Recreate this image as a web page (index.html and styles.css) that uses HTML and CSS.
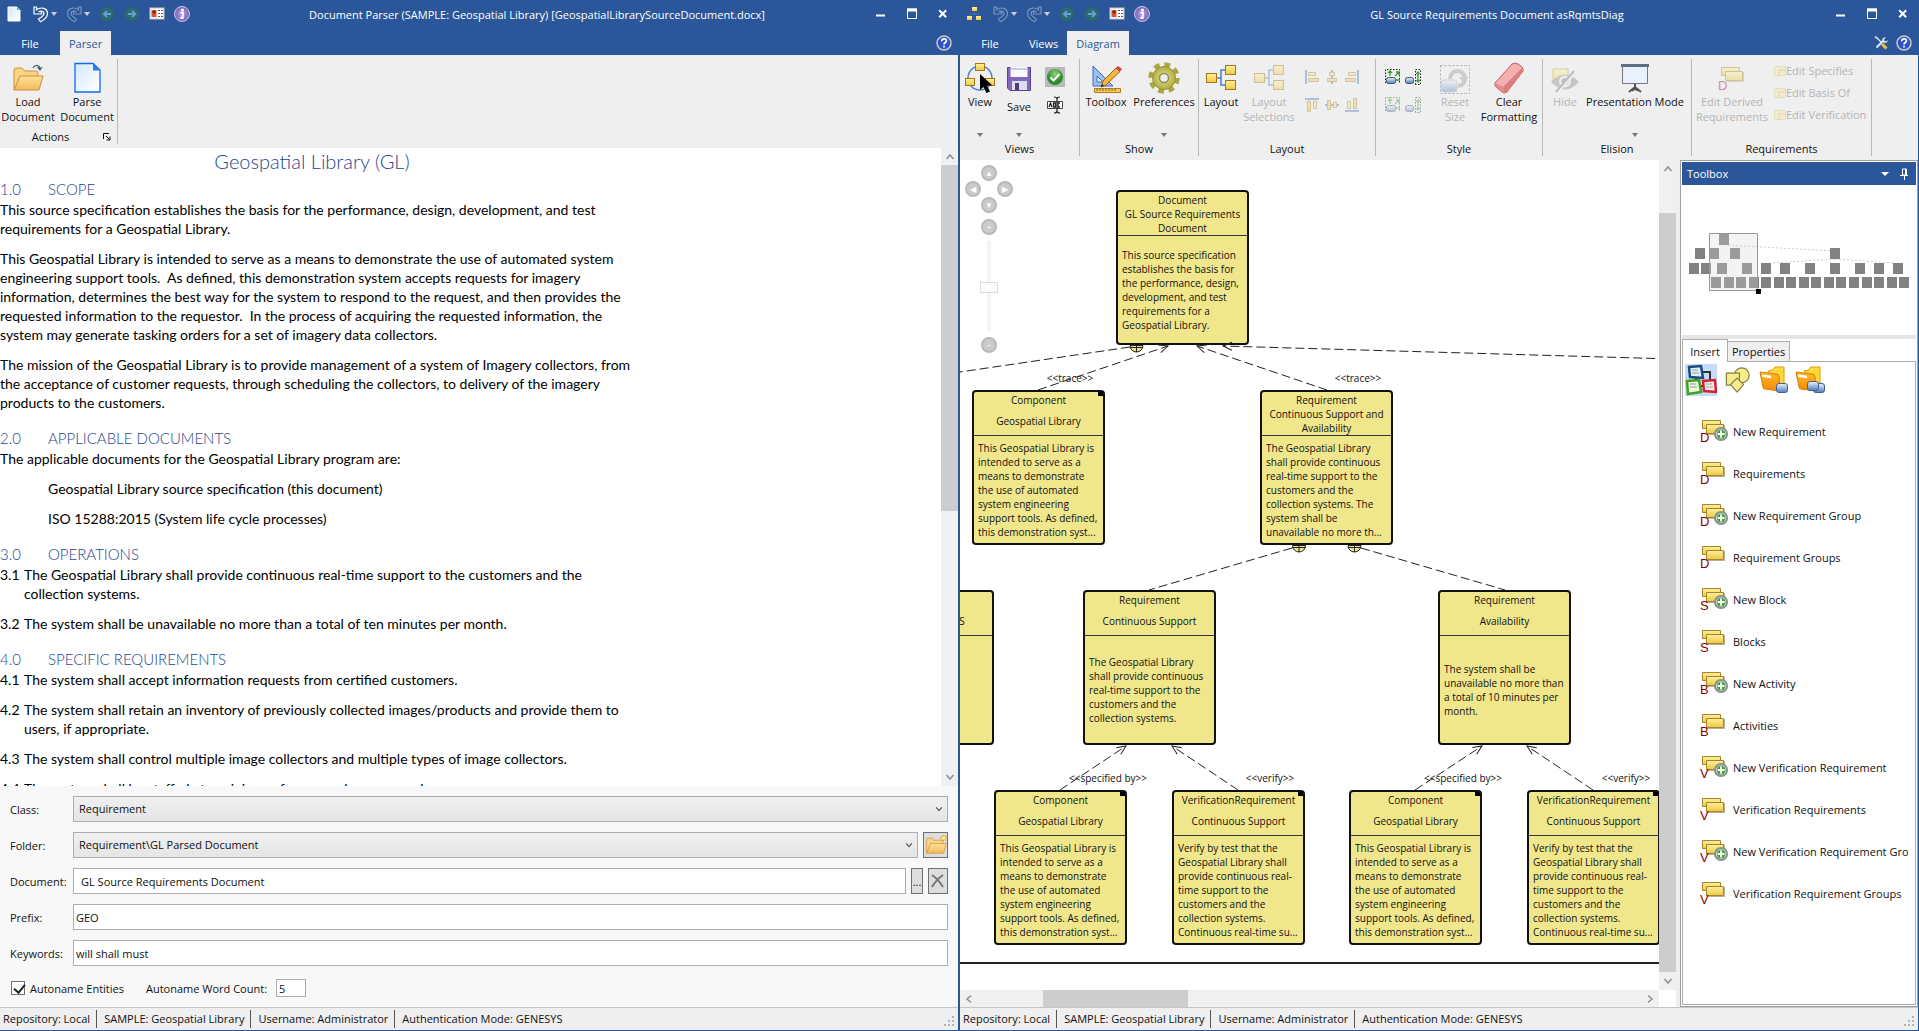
FILE: index.html
```
<!DOCTYPE html>
<html lang="en">
<head>
    <meta charset="UTF-8">
    <meta name="viewport" content="width=device-width, initial-scale=1.0">
    <title>Document Parser</title>
    <link rel="stylesheet" href="styles.css">
</head>
<body>
    <!-- shared icons -->
    <svg class="sprite" aria-hidden="true">
        <defs>
            <linearGradient id="gYellow" x1="0" y1="0" x2="0" y2="1"><stop offset="0" stop-color="#fff0a0"/><stop offset="1" stop-color="#eec93f"/></linearGradient>
            <linearGradient id="gFolder" x1="0" y1="0" x2="0" y2="1"><stop offset="0" stop-color="#ffe29a"/><stop offset="1" stop-color="#f2b95a"/></linearGradient>
            <linearGradient id="gOrange" x1="0" y1="0" x2="0" y2="1"><stop offset="0" stop-color="#ffb92e"/><stop offset="1" stop-color="#f28a05"/></linearGradient>
            <linearGradient id="gPage" x1="0" y1="0" x2="1" y2="1"><stop offset="0" stop-color="#d5e9fb"/><stop offset="1" stop-color="#ffffff"/></linearGradient>
            <linearGradient id="gBlue" x1="0" y1="0" x2="0" y2="1"><stop offset="0" stop-color="#eef3fa"/><stop offset=".5" stop-color="#9db9dc"/><stop offset="1" stop-color="#4f7db8"/></linearGradient>
            <radialGradient id="gPurple"><stop offset="0" stop-color="#b9a4e0"/><stop offset="1" stop-color="#7663b5"/></radialGradient>
            <radialGradient id="gGreen" cy=".3"><stop offset="0" stop-color="#8fd07c"/><stop offset="1" stop-color="#2f8a2c"/></radialGradient>
            <radialGradient id="gGear"><stop offset="0" stop-color="#e4e3a0"/><stop offset="1" stop-color="#b2ae3c"/></radialGradient>
        </defs>
        <symbol id="page" viewBox="0 0 14 16"><path d="M1 1h9l3 3v11H1z" fill="url(#gPage)" stroke="#fff"/><path d="M10 1v3h3z" fill="#5aa2ea"/></symbol>
        <symbol id="undo" viewBox="0 0 16 17"><path d="M1 1v7h7.5V5.700H5.500C9 4 12 6 10.500 9 9.500 11 7.500 12 5.500 13l2 2.800C11 14 14.500 11 14.500 7.500 14.500 2 8 .500 3.500 3.800V1z" fill="none" stroke="#fff" stroke-width="1.200"/></symbol>
        <symbol id="caret" viewBox="0 0 6 4"><path d="M0 0h6L3 4z" fill="currentColor"/></symbol>
        <symbol id="go" viewBox="0 0 16 16"><circle cx="8" cy="8" r="7" fill="#2c6a76" stroke="#2a5f70"/><path d="M12 8H5M8 4.800 4.800 8 8 11.200" fill="none" stroke="#6b9fd0" stroke-width="1.800"/></symbol>
        <symbol id="card" viewBox="0 0 16 14"><rect x="1" y="1" width="14" height="11" fill="#fff" stroke="#c9c4c0"/><rect x="2.500" y="3" width="5" height="7" fill="#d9512f"/><circle cx="5" cy="5" r="1.500" fill="#5b2a20"/><path d="M9 3.500h2m1 0h2M9 6.500h2m1 0h2M9 9.500h2m1 0h2" stroke="#555"/></symbol>
        <symbol id="info" viewBox="0 0 16 16"><circle cx="8" cy="8" r="7.500" fill="url(#gPurple)" stroke="#cfc4ea"/><circle cx="8.500" cy="4" r="1.500" fill="#fff"/><path d="M6.300 6.700h3L8.300 11.500h1.400M5.800 12h4" fill="none" stroke="#fff" stroke-width="1.700"/></symbol>
        <symbol id="org" viewBox="0 0 14 14"><g fill="url(#gYellow)"><rect x="5" y="0" width="5" height="4"/><rect x="0" y="9" width="5" height="4"/><rect x="9" y="9" width="5" height="4"/></g><path d="M7.500 4v3M3 9V7h9v2" fill="none" stroke="#3f6fae"/></symbol>
        <symbol id="help" viewBox="0 0 16 16"><circle cx="8" cy="8" r="7" fill="#2d55c8" stroke="#cfc8c4" stroke-width="1.500"/><path d="M5.700 6.300c0-3.300 5-3 4.700-.300C10.200 7.700 8 7.500 8 9.500M8 10.800v1.700" fill="none" stroke="#fff" stroke-width="1.700"/></symbol>
        <symbol id="tools" viewBox="0 0 14 14"><path d="M2.500 11.500 9 5" stroke="#e8eef5" stroke-width="2"/><path d="M8.500 5.500c-1-3 1-4.500 3.500-4L10 3.500l.500 1.500 1.500.500L13.500 4c.500 2.500-2 3.500-4 2.500" fill="#dfe7f0"/><path d="M1 2l1-1 5 5" fill="none" stroke="#e8eef5" stroke-width="1.300"/><path d="M8 8l4.500 4.500" stroke="#f0c24a" stroke-width="3"/></symbol>
        <symbol id="min" viewBox="0 0 10 12"><path d="M0 7.500h9" stroke="#fff" stroke-width="2"/></symbol>
        <symbol id="max" viewBox="0 0 10 12"><path d="M.500 1v9.500h9V1z" fill="none" stroke="#fff"/><path d="M0 2h10" stroke="#fff" stroke-width="3"/></symbol>
        <symbol id="close" viewBox="0 0 10 12"><path d="M1.200 2.200l7 7m0-7-7 7" stroke="#fff" stroke-width="2"/></symbol>
        <symbol id="folder" viewBox="0 0 32 32"><path d="M2 28V8q0-2 2-2h6l3 3h11q2 0 2 2v3" fill="#f8d486" stroke="#c98f3c"/><path d="M2 28 8 14h23l-4 14z" fill="url(#gFolder)" stroke="#c98f3c"/></symbol>
        <symbol id="load" viewBox="0 0 32 32"><use href="#folder"/><path d="M21 6c2-4 7-3 7 1m-2.500-2 2.500 3 2-3" fill="none" stroke="#4d6173" stroke-width="1.200"/></symbol>
        <symbol id="parse" viewBox="0 0 32 32"><path d="M4 1.500h18l7 6.500v22H4z" fill="url(#gPage)" stroke="#0a6cf0" stroke-width="1.300"/><path d="M22 1.500v7h7z" fill="#2f7de8"/></symbol>
        <symbol id="view" viewBox="0 0 32 32"><circle cx="16" cy="16" r="12" fill="none" stroke="#4a7fd0" stroke-width="1.500"/><g fill="url(#gYellow)" stroke="#a5761b"><rect x="11.500" y="1.500" width="9" height="7"/><rect x="1.500" y="16.500" width="9" height="7"/><rect x="21.500" y="16.500" width="9" height="7"/></g><path d="M16 12v16l3.500-3 3 6 3.500-1.500-3-6h5.500z" fill="#000"/></symbol>
        <symbol id="save" viewBox="0 0 32 32"><path d="M4.500 5.500h23v23H7l-2.500-2.500z" fill="#8466bd" stroke="#5b438f"/><path d="M7.500 5h17v10h-17z" fill="#f8f7fc"/><path d="M8 6h16v2H8z" fill="#d0cbe4"/><path d="M9 19h15v9H9z" fill="#dcdcea"/><path d="M12 21h4v7h-4z" fill="#4e3a83"/></symbol>
        <symbol id="check" viewBox="0 0 20 20"><path d="M0 0h20v20H0z" fill="#b9b9b9"/><circle cx="10" cy="10" r="8" fill="url(#gGreen)"/><path d="M5.500 10.500l3 3 6-6.500" fill="none" stroke="#fff" stroke-width="2"/></symbol>
        <symbol id="abc" viewBox="0 0 20 20"><path d="M2.500 6.500h15v7h-15z" fill="#fff" stroke="#444"/><path d="M4 12l1.500-4L7 12M8.500 8v4h2V8zM15 8h-2v4h2" fill="none" stroke="#222" stroke-width="1.300"/><path d="M12 3v14M9 2q3 0 3 2 0-2 3-2M9 18q3 0 3-2 0 2 3 2" fill="none" stroke="#222" stroke-width="1.200"/></symbol>
        <symbol id="toolbox" viewBox="0 0 32 32"><path d="M3 4v20h20z" fill="#9fc0ee" stroke="#3c6bc0"/><path d="M7 14v6h6z" fill="#efefef" stroke="#3c6bc0"/><path d="M4.500 26.500h26v4h-26z" fill="#f6cb5c" stroke="#b07d1d"/><path d="M7 27v2m3-2v2m3-2v2m3-2v2m3-2v2m3-2v2m3-2v2" stroke="#8a5d10"/><path d="M11 25l2-6L26 6l4 3.500L16 23z" fill="#f7b53c" stroke="#995f12"/><path d="M26 6l2-2 4 3-2 2.500z" fill="#d73e4a"/><path d="M11 25l1-3 2 2z" fill="#222"/></symbol>
        <symbol id="gear" viewBox="0 0 32 32"><circle cx="16" cy="16" r="13" fill="none" stroke="#aaa640" stroke-width="5.500" stroke-dasharray="5.500 4.710"/><circle cx="16" cy="16" r="11.500" fill="url(#gGear)" stroke="#98943a"/><circle cx="16" cy="16" r="4.500" fill="#efefef" stroke="#8f8d62" stroke-width="1.500"/></symbol>
        <symbol id="layout" viewBox="0 0 32 32"><path d="M11 16h5m4-8h-4v15h4" fill="none" stroke="#4a7fc8" stroke-width="1.500"/><g fill="url(#gYellow)" stroke="#a5761b"><rect x="1.500" y="11.500" width="10" height="9"/><rect x="20.500" y="3.500" width="10" height="9"/><rect x="20.500" y="18.500" width="10" height="9"/></g></symbol>
        <symbol id="alignL" viewBox="0 0 14 14"><path d="M1 0v14" stroke="#4a76c0" stroke-width="2"/><path d="M3.500 2.500h7v3h-7zM3.500 8.500h10v3h-10z" fill="url(#gYellow)" stroke="#a5832b"/></symbol>
        <symbol id="alignC" viewBox="0 0 14 14"><path d="M7 0v14" stroke="#4a76c0" stroke-width="2"/><path d="M4.500 2.500h5v3h-5zM2.500 8.500h9v3h-9z" fill="url(#gYellow)" stroke="#a5832b"/></symbol>
        <symbol id="sizeBoth" viewBox="0 0 16 16"><path d="M.500 14V.500h14V14" fill="none" stroke="#222" stroke-dasharray="1.500 1.500"/><rect x="1.500" y="8.500" width="9" height="6" rx="2" fill="url(#gBlue)" stroke="#456"/><path d="M5 7V2M3 4l2-2 2 2M10 7l4-4m-3 0h3v3M11 11h4" fill="none" stroke="#3b9b35" stroke-width="1.300"/></symbol>
        <symbol id="sizeTall" viewBox="0 0 16 16"><path d="M10.500 15.500V.500h5v15z" fill="none" stroke="#222" stroke-dasharray="1.500 1.500"/><rect x=".500" y="8.500" width="8" height="6" rx="2" fill="url(#gBlue)" stroke="#456"/><path d="M13 3v10M11.500 5 13 3l1.500 2M11.500 11l1.500 2 1.500-2" fill="none" stroke="#3b9b35" stroke-width="1.300"/></symbol>
        <symbol id="reset" viewBox="0 0 32 32"><path d="M1.500 3.500h29v28h-29z" fill="none" stroke="#555" stroke-dasharray="2 2"/><path d="M11 17a7.500 7.500 0 1 1 8 7" fill="none" stroke="#9a9a9a" stroke-width="4"/><path d="M20 15h9l-4 7z" fill="#9a9a9a"/><rect x="2" y="18" width="16" height="12" rx="3" fill="url(#gBlue)" stroke="#9ab"/></symbol>
        <symbol id="eraser" viewBox="0 0 32 32"><path d="M2 21 19 2q3-2 6 0l4 3q2 2 1 4L14 30q-3 2-5 0l-6-5q-2-2-1-4z" fill="#f4b0b0" stroke="#c45b5e"/><path d="M11 24 29 6v5L14 30l-3 1z" fill="#de7d80"/><path d="M2 21l9 4v6l-8-6z" fill="#e48c8e"/></symbol>
        <symbol id="hide" viewBox="0 0 32 32"><path d="M4 7h15v13H4z" fill="url(#gYellow)" stroke="#b89b3a"/><path d="M2 20q14-15 28 0-14 15-28 0z" fill="#8a8a8a"/><circle cx="16" cy="19.500" r="6" fill="#e8e8e8"/><circle cx="16" cy="19.500" r="3.500" fill="#777"/><path d="M8 30 26 10" stroke="#efefef" stroke-width="4"/><path d="M7 30 25 9" stroke="#777" stroke-width="2"/></symbol>
        <symbol id="present" viewBox="0 0 32 32"><path d="M3.500 4.500h25v17h-25z" fill="#e9f1ff" stroke="#777"/><path d="M2 3.500h28" stroke="#5d6f82" stroke-width="3"/><path d="M16 22v4m0-1-6 5m6-5 6 5m-9-1q3-4 6 0" fill="none" stroke="#555" stroke-width="2"/></symbol>
        <symbol id="cards" viewBox="0 0 28 24"><path d="M2.500 1.500h18v8h-18z" fill="url(#gYellow)" stroke="#a5842a"/><path d="M6.500 5.500h17v9h-17z" fill="url(#gYellow)" stroke="#a5842a"/><path d="M7 15.500h17.500V6" fill="none" stroke="#8d7a4a" opacity=".6"/></symbol>
        <symbol id="plus" viewBox="0 0 14 14"><circle cx="7" cy="7" r="6" fill="#fff" stroke="#8b8b8b" stroke-width="2"/><circle cx="7" cy="7" r="4.500" fill="#3ea345"/><path d="M7 3.500v7M3.500 7h7" stroke="#fff" stroke-width="2"/></symbol>
        <symbol id="edit" viewBox="0 0 12 12"><path d="M.500 1.500h11v9h-11z" fill="#f7e9a0" stroke="#d8c878"/><path d="M5 11V5h6" fill="none" stroke="#c3b263"/></symbol>
        <symbol id="model" viewBox="0 0 32 32"><path d="M15 8h10v14H11V12" fill="none" stroke="#333" stroke-width="2"/><path d="M4 3l12-1 2 12-13-1z" fill="#e3eef8" stroke="#164a80" stroke-width="2.500"/><path d="M2 17l12-1 2 12-13 2z" fill="#eaf8df" stroke="#43a021" stroke-width="2.500"/><path d="M18 17l12-1 1 12-12-1z" fill="#fdecee" stroke="#d91d32" stroke-width="2.500"/><path d="M7 6h6m-6 3h7M5 20h6m-6 3h7m9-3h6m-6 3h7" stroke="#999"/></symbol>
        <symbol id="shapes" viewBox="0 0 28 28"><g fill="#f6ec8e" stroke="#857e3c" stroke-width="1.300"><circle cx="18" cy="9" r="8"/><path d="M1.500 6.500h14v13h-14z"/><path d="M13 12l7 7-7 8-7-8z"/></g></symbol>
        <symbol id="db" viewBox="0 0 12 11"><rect x=".500" y=".500" width="11" height="9" rx="2.500" fill="url(#gBlue)" stroke="#44628b"/></symbol>
        <symbol id="book" viewBox="0 0 30 28"><path d="M9 5q5 0 7-4h9v20l-4 4z" fill="#ffd83a" stroke="#e8960b"/><path d="M1 6l16 2q3 0 3 3l1 14-15-2q-2 0-2-2z" fill="url(#gOrange)" stroke="#d97c02"/><path d="M3 8.500l9 1.200v2.500L3.500 11z" fill="#fff"/></symbol>
        <symbol id="book1" viewBox="0 0 30 28"><use href="#book"/><use href="#db" x="17" y="17" width="12" height="11"/></symbol>
        <symbol id="book2" viewBox="0 0 30 28"><use href="#book"/><use href="#db" x="18" y="17" width="12" height="11"/><use href="#db" x="12" y="15" width="12" height="11"/></symbol>
        <symbol id="launch" viewBox="0 0 8 8"><path d="M.500 6V.500H6M3 3l4 4M7 3.500V7H3.500" fill="none" stroke="#111"/></symbol>
        <symbol id="grip" viewBox="0 0 12 12"><path d="M8 0h2v2H8zM4 4h2v2H4zM8 4h2v2H8zM0 8h2v2H0zM4 8h2v2H4zM8 8h2v2H8z" fill="#b5b5b5"/></symbol>
        <symbol id="chevron" viewBox="0 0 10 10"><path d="M1.500 7 5 3l3.500 4" fill="none" stroke="currentColor" stroke-width="1.500"/></symbol>
    </svg>

    <div class="desktop">
        <!-- Document Parser window -->
        <section class="window">
            <header class="titlebar">
                <div class="quick">
                    <svg class="q-app" width="14" height="16"><use href="#page"/></svg>
                    <button class="q-btn" title="Undo"><svg width="16" height="17"><use href="#undo"/></svg><svg class="q-caret" width="6" height="4"><use href="#caret"/></svg></button>
                    <button class="q-btn dim" title="Redo"><svg class="flip" width="16" height="17"><use href="#undo"/></svg><svg class="q-caret" width="6" height="4"><use href="#caret"/></svg></button>
                    <button class="q-btn" title="Back"><svg width="16" height="16"><use href="#go"/></svg></button>
                    <button class="q-btn" title="Forward"><svg class="flip" width="16" height="16"><use href="#go"/></svg></button>
                    <button class="q-btn" title="Card"><svg width="16" height="14"><use href="#card"/></svg></button>
                    <button class="q-btn" title="About"><svg width="16" height="16"><use href="#info"/></svg></button>
                </div>
                <h1 class="caption">Document Parser (SAMPLE: Geospatial Library) [GeospatialLibrarySourceDocument.docx]</h1>
                <div class="controls">
                    <button title="Minimize"><svg width="10" height="12"><use href="#min"/></svg></button>
                    <button title="Maximize"><svg width="10" height="12"><use href="#max"/></svg></button>
                    <button title="Close"><svg width="10" height="12"><use href="#close"/></svg></button>
                </div>
            </header>
            <nav class="tabs">
                <button class="tab file">File</button>
                <button class="tab active">Parser</button>
                <button class="help" title="Help"><svg width="16" height="16"><use href="#help"/></svg></button>
            </nav>
            <div class="ribbon compact">
                <div class="group g-actions">
                    <div class="tools">
                        <button class="tool w56"><svg width="32" height="32"><use href="#load"/></svg>Load<br>Document</button>
                        <button class="tool w56"><svg width="32" height="32"><use href="#parse"/></svg>Parse<br>Document</button>
                    </div>
                    <div class="group-name">Actions<button class="launch" title="Actions options"><svg width="8" height="8"><use href="#launch"/></svg></button></div>
                </div>
            </div>

            <div class="doc-area">
                <article class="doc">
                    <h2>Geospatial Library (GL)</h2>
                    <h3><span>1.0</span>SCOPE</h3>
                    <p>This source specification establishes the basis for the performance, design, development, and test<br>requirements for a Geospatial Library.</p>
                    <p>This Geospatial Library is intended to serve as a means to demonstrate the use of automated system<br>engineering support tools.&nbsp; As defined, this demonstration system accepts requests for imagery<br>information, determines the best way for the system to respond to the request, and then provides the<br>requested information to the requestor.&nbsp; In the process of acquiring the requested information, the<br>system may generate tasking orders for a set of imagery data collectors.</p>
                    <p>The mission of the Geospatial Library is to provide management of a system of Imagery collectors, from<br>the acceptance of customer requests, through scheduling the collectors, to delivery of the imagery<br>products to the customers.</p>
                    <h3><span>2.0</span>APPLICABLE DOCUMENTS</h3>
                    <p>The applicable documents for the Geospatial Library program are:</p>
                    <p class="indent">Geospatial Library source specification (this document)</p>
                    <p class="indent">ISO 15288:2015 (System life cycle processes)</p>
                    <h3><span>3.0</span>OPERATIONS</h3>
                    <p class="item"><span>3.1</span>The Geospatial Library shall provide continuous real-time support to the customers and the<br>collection systems.</p>
                    <p class="item"><span>3.2</span>The system shall be unavailable no more than a total of ten minutes per month.</p>
                    <h3><span>4.0</span>SPECIFIC REQUIREMENTS</h3>
                    <p class="item"><span>4.1</span>The system shall accept information requests from certified customers.</p>
                    <p class="item"><span>4.2</span>The system shall retain an inventory of previously collected images/products and provide them to<br>users, if appropriate.</p>
                    <p class="item"><span>4.3</span>The system shall control multiple image collectors and multiple types of image collectors.</p>
                    <p class="item"><span>4.4</span>The system shall be staffed at a minimum for seven days per week.</p>
                </article>
                <div class="vscroll">
                    <svg width="10" height="10"><use href="#chevron"/></svg>
                    <div class="track"><div class="thumb doc-thumb"></div></div>
                    <svg class="down" width="10" height="10"><use href="#chevron"/></svg>
                </div>
            </div>

            <form class="form">
                <div class="row">
                    <label for="class">Class:</label>
                    <div class="combo"><select id="class"><option>Requirement</option></select><svg class="down" width="8" height="8"><use href="#chevron"/></svg></div>
                </div>
                <div class="row">
                    <label for="folder-select">Folder:</label>
                    <div class="combo"><select id="folder-select"><option>Requirement\GL Parsed Document</option></select><svg class="down" width="8" height="8"><use href="#chevron"/></svg></div>
                    <button type="button" class="btn w25" title="New folder"><svg width="22" height="22" viewBox="0 0 32 32"><use href="#folder"/><path d="M27 1v10M22 6h10M23.500 2.500l7 7m0-7-7 7" stroke="#f5a81c" stroke-width="1.500"/><circle cx="27" cy="6" r="2.500" fill="#fff2a0"/></svg></button>
                </div>
                <div class="row">
                    <label for="document">Document:</label>
                    <input type="text" id="document" class="inset" value="GL Source Requirements Document">
                    <button type="button" class="btn w12">...</button>
                    <button type="button" class="btn w20" title="Clear"><svg width="14" height="14"><path d="M1 1q6 4 11 12M12 1Q6 5 1 13" fill="none" stroke="#777" stroke-width="2"/></svg></button>
                </div>
                <div class="row">
                    <label for="prefix">Prefix:</label>
                    <input type="text" id="prefix" value="GEO">
                </div>
                <div class="row">
                    <label for="keywords">Keywords:</label>
                    <input type="text" id="keywords" value="will shall must">
                </div>
                <div class="row last">
                    <input type="checkbox" id="autoname" checked>
                    <label for="autoname" class="auto">Autoname Entities</label>
                    <label for="count" class="count-label">Autoname Word Count:</label>
                    <input type="text" id="count" class="count" value="5">
                </div>
            </form>
            <footer class="status">
                <span>Repository: Local</span><span>SAMPLE: Geospatial Library</span><span>Username: Administrator</span><span>Authentication Mode: GENESYS</span>
                <svg class="grip" width="12" height="12"><use href="#grip"/></svg>
            </footer>
        </section>

        <!-- Diagram window -->
        <section class="window">
            <header class="titlebar">
                <div class="quick">
                    <svg class="q-app" width="14" height="14"><use href="#org"/></svg>
                    <button class="q-btn dim" title="Undo"><svg width="16" height="17"><use href="#undo"/></svg><svg class="q-caret" width="6" height="4"><use href="#caret"/></svg></button>
                    <button class="q-btn dim" title="Redo"><svg class="flip" width="16" height="17"><use href="#undo"/></svg><svg class="q-caret" width="6" height="4"><use href="#caret"/></svg></button>
                    <button class="q-btn" title="Back"><svg width="16" height="16"><use href="#go"/></svg></button>
                    <button class="q-btn" title="Forward"><svg class="flip" width="16" height="16"><use href="#go"/></svg></button>
                    <button class="q-btn" title="Card"><svg width="16" height="14"><use href="#card"/></svg></button>
                    <button class="q-btn" title="About"><svg width="16" height="16"><use href="#info"/></svg></button>
                </div>
                <h1 class="caption">GL Source Requirements Document asRqmtsDiag</h1>
                <div class="controls">
                    <button title="Minimize"><svg width="10" height="12"><use href="#min"/></svg></button>
                    <button title="Maximize"><svg width="10" height="12"><use href="#max"/></svg></button>
                    <button title="Close"><svg width="10" height="12"><use href="#close"/></svg></button>
                </div>
            </header>
            <nav class="tabs">
                <button class="tab file">File</button>
                <button class="tab">Views</button>
                <button class="tab active">Diagram</button>
                <button class="help" title="Tools"><svg width="14" height="14"><use href="#tools"/></svg></button>
                <button class="help next" title="Help"><svg width="16" height="16"><use href="#help"/></svg></button>
            </nav>
            <div class="ribbon">
                <div class="group g-views">
                    <div class="tools">
                        <button class="tool w40"><svg width="32" height="32"><use href="#view"/></svg>View<svg class="drop" width="6" height="4"><use href="#caret"/></svg></button>
                        <button class="tool w40 low"><svg width="32" height="32"><use href="#save"/></svg>Save<svg class="drop" width="6" height="4"><use href="#caret"/></svg></button>
                        <div class="icons one">
                            <button title="Validate"><svg width="20" height="20"><use href="#check"/></svg></button>
                            <button title="Rename"><svg width="20" height="20"><use href="#abc"/></svg></button>
                        </div>
                    </div>
                    <div class="group-name">Views</div>
                </div>
                <div class="group g-show">
                    <div class="tools">
                        <button class="tool w50"><svg width="32" height="32"><use href="#toolbox"/></svg>Toolbox</button>
                        <button class="tool w64"><svg width="32" height="32"><use href="#gear"/></svg>Preferences<svg class="drop" width="6" height="4"><use href="#caret"/></svg></button>
                    </div>
                    <div class="group-name">Show</div>
                </div>
                <div class="group g-layout">
                    <div class="tools">
                        <button class="tool w40"><svg width="32" height="32"><use href="#layout"/></svg>Layout</button>
                        <button class="tool w56" disabled><svg width="32" height="32"><use href="#layout"/></svg>Layout<br>Selections</button>
                        <div class="icons three">
                            <button disabled title="Align left"><svg width="14" height="14"><use href="#alignL"/></svg></button>
                            <button disabled title="Align center"><svg width="14" height="14"><use href="#alignC"/></svg></button>
                            <button disabled title="Align right"><svg class="flip" width="14" height="14"><use href="#alignL"/></svg></button>
                            <button disabled title="Align top"><svg class="turn" width="14" height="14"><use href="#alignL"/></svg></button>
                            <button disabled title="Align middle"><svg class="turn" width="14" height="14"><use href="#alignC"/></svg></button>
                            <button disabled title="Align bottom"><svg class="turn-back" width="14" height="14"><use href="#alignL"/></svg></button>
                        </div>
                    </div>
                    <div class="group-name">Layout</div>
                </div>
                <div class="group g-style">
                    <div class="tools">
                        <div class="icons two">
                            <button title="Same size"><svg width="16" height="16"><use href="#sizeBoth"/></svg></button>
                            <button title="Same height"><svg width="16" height="16"><use href="#sizeTall"/></svg></button>
                            <button disabled title="Same width"><svg width="16" height="16"><use href="#sizeBoth"/></svg></button>
                            <button disabled title="Fit height"><svg width="16" height="16"><use href="#sizeTall"/></svg></button>
                        </div>
                        <button class="tool w50" disabled><svg width="32" height="32"><use href="#reset"/></svg>Reset<br>Size</button>
                        <button class="tool w56"><svg width="32" height="32"><use href="#eraser"/></svg>Clear<br>Formatting</button>
                    </div>
                    <div class="group-name">Style</div>
                </div>
                <div class="group g-elision">
                    <div class="tools">
                        <button class="tool w40" disabled><svg width="32" height="32"><use href="#hide"/></svg>Hide</button>
                        <button class="tool w100"><svg width="32" height="32"><use href="#present"/></svg>Presentation Mode<svg class="drop" width="6" height="4"><use href="#caret"/></svg></button>
                    </div>
                    <div class="group-name">Elision</div>
                </div>
                <div class="group g-reqs">
                    <div class="tools">
                        <button class="tool w74" disabled><svg width="32" height="32" viewBox="0 0 32 32"><use href="#cards" x="3" y="4" width="28" height="24"/><text x="2" y="28" class="letter">D</text></svg>Edit Derived<br>Requirements</button>
                        <div class="links">
                            <button disabled><svg width="12" height="12"><use href="#edit"/></svg>Edit Specifies</button>
                            <button disabled><svg width="12" height="12"><use href="#edit"/></svg>Edit Basis Of</button>
                            <button disabled><svg width="12" height="12"><use href="#edit"/></svg>Edit Verification</button>
                        </div>
                    </div>
                    <div class="group-name">Requirements</div>
                </div>
            </div>

            <div class="work">
                <div class="canvas-area">
                    <div class="canvas-row">
                        <div class="canvas">
                            <div class="node" style="left:156px;top:30px"><b>Document</b><h4>GL Source Requirements<br>Document</h4><p>This source specification<br>establishes the basis for<br>the performance, design,<br>development, and test<br>requirements for a<br>Geospatial Library.</p></div>
                            <div class="node leaf" style="left:12px;top:230px"><b>Component</b><h4>Geospatial Library</h4><p>This Geospatial Library is<br>intended to serve as a<br>means to demonstrate<br>the use of automated<br>system engineering<br>support tools. As defined,<br>this demonstration syst...</p></div>
                            <div class="node" style="left:300px;top:230px"><b>Requirement</b><h4>Continuous Support and<br>Availability</h4><p>The Geospatial Library<br>shall provide continuous<br>real-time support to the<br>customers and the<br>collection systems. The<br>system shall be<br>unavailable no more th...</p></div>
                            <div class="node" style="left:-99px;top:430px"><b>Requirement</b><h4>REQUIREMENTS</h4></div>
                            <div class="node" style="left:123px;top:430px"><b>Requirement</b><h4>Continuous Support</h4><p>The Geospatial Library<br>shall provide continuous<br>real-time support to the<br>customers and the<br>collection systems.</p></div>
                            <div class="node" style="left:478px;top:430px"><b>Requirement</b><h4>Availability</h4><p>The system shall be<br>unavailable no more than<br>a total of 10 minutes per<br>month.</p></div>
                            <div class="node leaf" style="left:34px;top:630px"><b>Component</b><h4>Geospatial Library</h4><p>This Geospatial Library is<br>intended to serve as a<br>means to demonstrate<br>the use of automated<br>system engineering<br>support tools. As defined,<br>this demonstration syst...</p></div>
                            <div class="node leaf" style="left:212px;top:630px"><b>VerificationRequirement</b><h4>Continuous Support</h4><p>Verify by test that the<br>Geospatial Library shall<br>provide continuous real-<br>time support to the<br>customers and the<br>collection systems.<br>Continuous real-time su...</p></div>
                            <div class="node leaf" style="left:389px;top:630px"><b>Component</b><h4>Geospatial Library</h4><p>This Geospatial Library is<br>intended to serve as a<br>means to demonstrate<br>the use of automated<br>system engineering<br>support tools. As defined,<br>this demonstration syst...</p></div>
                            <div class="node leaf" style="left:567px;top:630px"><b>VerificationRequirement</b><h4>Continuous Support</h4><p>Verify by test that the<br>Geospatial Library shall<br>provide continuous real-<br>time support to the<br>customers and the<br>collection systems.<br>Continuous real-time su...</p></div>

                            <span class="edge-label" style="left:110px;top:211px">&lt;&lt;trace&gt;&gt;</span>
                            <span class="edge-label" style="left:398px;top:211px">&lt;&lt;trace&gt;&gt;</span>
                            <span class="edge-label" style="left:148px;top:611px">&lt;&lt;specified by&gt;&gt;</span>
                            <span class="edge-label" style="left:310px;top:611px">&lt;&lt;verify&gt;&gt;</span>
                            <span class="edge-label" style="left:503px;top:611px">&lt;&lt;specified by&gt;&gt;</span>
                            <span class="edge-label" style="left:666px;top:611px">&lt;&lt;verify&gt;&gt;</span>

                            <svg class="edges" width="1200" height="820">
                                <defs>
                                    <marker id="arrow" viewBox="0 0 12 12" refX="11" refY="6" markerWidth="12" markerHeight="12" orient="auto"><path d="M2 2l9 4-9 4" fill="none" stroke="#222"/></marker>
                                </defs>
                                <g fill="#efe48a" stroke="#222">
                                    <path d="M170 185.500a6.500 6.500 0 0 0 13 0zM176.500 185v7M170 187.500h13"/>
                                    <path d="M332.500 385.500a6.500 6.500 0 0 0 13 0zM339 385v7M332.500 387.500h13"/>
                                    <path d="M388 385.500a6.500 6.500 0 0 0 13 0zM394.500 385v7M388 387.500h13"/>
                                </g>
                                <g class="lines">
                                    <path d="M170 187 0 212"/>
                                    <path d="M332 388 189 430"/>
                                    <path d="M401 388 545 430"/>
                                    <path d="M78 230l130-44" marker-end="url(#arrow)"/>
                                    <path d="M367 230l-130-44" marker-end="url(#arrow)"/>
                                    <path d="M1163 212 263 186" marker-end="url(#arrow)"/>
                                    <path d="M100 630l66-44" marker-end="url(#arrow)"/>
                                    <path d="M278 630l-66-44" marker-end="url(#arrow)"/>
                                    <path d="M455 630l67-44" marker-end="url(#arrow)"/>
                                    <path d="M633 630l-66-44" marker-end="url(#arrow)"/>
                                </g>
                                <path d="M0 803h1200" stroke="#222" stroke-width="2"/>
                            </svg>

                            <div class="navpad">
                                <button class="n-up" title="Pan up">&#9650;</button>
                                <button class="n-left" title="Pan left">&#9664;</button>
                                <button class="n-right" title="Pan right">&#9654;</button>
                                <button class="n-down" title="Pan down">&#9660;</button>
                                <button class="n-in" title="Zoom in">+</button>
                                <input type="range" class="n-zoom" aria-label="Zoom" value="52">
                                <button class="n-out" title="Zoom out">&#8722;</button>
                            </div>
                        </div>
                        <div class="vscroll">
                            <svg width="10" height="10"><use href="#chevron"/></svg>
                            <div class="track"><div class="thumb canvas-thumb"></div></div>
                            <svg class="down" width="10" height="10"><use href="#chevron"/></svg>
                        </div>
                    </div>
                    <div class="hscroll">
                        <svg class="turn-back" width="10" height="10"><use href="#chevron"/></svg>
                        <div class="htrack"><div class="hthumb"></div></div>
                        <svg class="turn" width="10" height="10"><use href="#chevron"/></svg>
                    </div>
                </div>

                <aside class="toolbox">
                    <header>Toolbox
                        <button title="Menu"><svg width="8" height="4" viewBox="0 0 6 4" preserveAspectRatio="none"><use href="#caret"/></svg></button>
                        <button title="Pin"><svg width="8" height="12"><path d="M2.500 1h4v6h-4zM5.500 1v6M0 7.500h8M4.500 8v4" fill="none" stroke="#fff"/></svg></button>
                    </header>
                    <div class="overview">
                        <svg width="234" height="150" viewBox="0 0 234 150">
                            <path d="M42 60 153 66M153 74 90 78M153 74l60 4" fill="none" stroke="#ccc" stroke-dasharray="2 2"/>
                            <g fill="#828282">
                                <path d="M37 49h10v11H37z"/>
                                <path d="M13 63h10v11H13zM27 63h10v11H27zM48 63h10v11H48zM148 63h10v11h-10z"/>
                                <path d="M7 78h10v11H7zM19 78h10v11H19zM35 78h10v11H35zM60 78h10v11H60zM79 78h10v11H79zM98 78h10v11H98zM123 78h10v11h-10zM148 78h10v11h-10zM173 78h10v11h-10zM192 78h10v11h-10zM211 78h10v11h-10z"/>
                                <path d="M29 92h10v11H29zM42 92h10v11H42zM54 92h10v11H54zM67 92h10v11H67zM79 92h10v11H79zM92 92h10v11H92zM104 92h10v11h-10zM117 92h10v11h-10zM129 92h10v11h-10zM142 92h10v11h-10zM154 92h10v11h-10zM167 92h10v11h-10zM180 92h10v11h-10zM192 92h10v11h-10zM205 92h10v11h-10zM217 92h10v11h-10z"/>
                            </g>
                            <path d="M27.500 48.500h48v57h-48z" fill="#d8d8d8" fill-opacity=".3" stroke="#999"/>
                            <path d="M74 104h5v5h-5z"/>
                        </svg>
                    </div>
                    <div class="pane-tabs">
                        <button class="pane-tab on">Insert</button>
                        <button class="pane-tab">Properties</button>
                    </div>
                    <div class="pane">
                        <div class="palette">
                            <button class="on" title="Model"><svg width="32" height="32"><use href="#model"/></svg></button>
                            <button title="Shapes"><svg width="26" height="26"><use href="#shapes"/></svg></button>
                            <button title="Folder"><svg width="30" height="28"><use href="#book1"/></svg></button>
                            <button title="Folders"><svg width="30" height="28"><use href="#book2"/></svg></button>
                        </div>
                        <ul class="items">
                            <li><svg width="28" height="24"><use href="#cards"/><text x="0" y="23" class="letter">D</text><use href="#plus" x="14" y="8" width="14" height="14"/></svg>New Requirement</li>
                            <li><svg width="28" height="24"><use href="#cards"/><text x="0" y="23" class="letter">D</text></svg>Requirements</li>
                            <li><svg width="28" height="24"><use href="#cards"/><text x="0" y="23" class="letter">D</text><use href="#plus" x="14" y="8" width="14" height="14"/></svg>New Requirement Group</li>
                            <li><svg width="28" height="24"><use href="#cards"/><text x="0" y="23" class="letter">D</text></svg>Requirement Groups</li>
                            <li><svg width="28" height="24"><use href="#cards"/><text x="0" y="23" class="letter">S</text><use href="#plus" x="14" y="8" width="14" height="14"/></svg>New Block</li>
                            <li><svg width="28" height="24"><use href="#cards"/><text x="0" y="23" class="letter">S</text></svg>Blocks</li>
                            <li><svg width="28" height="24"><use href="#cards"/><text x="0" y="23" class="letter">B</text><use href="#plus" x="14" y="8" width="14" height="14"/></svg>New Activity</li>
                            <li><svg width="28" height="24"><use href="#cards"/><text x="0" y="23" class="letter">B</text></svg>Activities</li>
                            <li><svg width="28" height="24"><use href="#cards"/><text x="0" y="23" class="letter">V</text><use href="#plus" x="14" y="8" width="14" height="14"/></svg>New Verification Requirement</li>
                            <li><svg width="28" height="24"><use href="#cards"/><text x="0" y="23" class="letter">V</text></svg>Verification Requirements</li>
                            <li><svg width="28" height="24"><use href="#cards"/><text x="0" y="23" class="letter">V</text><use href="#plus" x="14" y="8" width="14" height="14"/></svg>New Verification Requirement Group</li>
                            <li><svg width="28" height="24"><use href="#cards"/><text x="0" y="23" class="letter">V</text></svg>Verification Requirement Groups</li>
                        </ul>
                    </div>
                </aside>
            </div>
            <footer class="status">
                <span>Repository: Local</span><span>SAMPLE: Geospatial Library</span><span>Username: Administrator</span><span>Authentication Mode: GENESYS</span>
                <svg class="grip" width="12" height="12"><use href="#grip"/></svg>
            </footer>
        </section>
    </div>
</body>
</html>
```

FILE: styles.css
```
* {
    box-sizing: border-box;
}
body {
    margin: 0;
    font-family: "Open Sans", sans-serif;
    font-size: 11px;
    line-height: 15px;
    color: #111;
}
button {
    font: inherit;
    color: inherit;
    background: none;
    border: 0;
    padding: 0;
}
svg {
    display: block;
    flex: none;
}
h1, h2, h3, h4, p, ul {
    margin: 0;
    padding: 0;
    font-weight: normal;
}
.sprite {
    position: absolute;
    width: 0;
    height: 0;
}
.flip {
    transform: scaleX(-1);
}
.down {
    transform: rotate(180deg);
}
.turn {
    transform: rotate(90deg);
}
.turn-back {
    transform: rotate(-90deg);
}
.desktop {
    display: grid;
    grid-template-columns: 960fr 959fr;
    height: 100vh;
    overflow: hidden;
}
.window {
    display: flex;
    flex-direction: column;
    min-width: 0;
    min-height: 0;
    border-right: 2px solid #2b579a;
    border-bottom: 1px solid #2b579a;
    background: #efefef;
}
.window:last-child {
    border-right-width: 1px;
}

/* title bar and tabs */
.titlebar {
    display: flex;
    align-items: center;
    height: 31px;
    padding: 0 10px 3px 7px;
    background: #2b579a;
    color: #fff;
    flex: none;
}
.quick {
    display: flex;
    align-items: center;
    gap: 9px;
}
.q-app {
    margin-right: 3px;
}
.q-btn {
    display: flex;
    align-items: center;
    gap: 2px;
    color: #c9d0da;
}
.q-btn.dim svg:first-child {
    opacity: .35;
}
.caption {
    flex: 1;
    padding-left: 8px;
    text-align: center;
    font-size: 11px;
    white-space: nowrap;
}
.controls {
    display: flex;
    gap: 21px;
}
.tabs {
    display: flex;
    height: 24px;
    flex: none;
    padding-right: 6px;
    background: #2b579a;
    color: #fff;
}
.tab {
    padding: 0 9px;
}
.tab.file {
    width: 60px;
}
.tab.active {
    background: #efefef;
    color: #2b579a;
}
.help {
    margin-left: auto;
}
.help.next {
    margin-left: 8px;
}

/* ribbon */
.ribbon {
    display: flex;
    height: 105px;
    flex: none;
    padding: 4px 0;
}
.ribbon.compact {
    height: 93px;
}
.group {
    display: flex;
    flex-direction: column;
    flex: none;
    border-right: 1px solid #b9b9b9;
}
.g-actions { width: 118px; }
.g-views { width: 120px; }
.g-show { width: 119px; }
.g-layout { width: 177px; }
.g-style { width: 167px; }
.g-elision { width: 149px; }
.g-reqs { width: 180px; }
.tools {
    display: flex;
    flex: 1;
    gap: 1px;
    padding: 3px 0 0 1px;
}
.g-actions .tools {
    gap: 3px;
    padding-left: 0;
}
.g-layout .tools,
.g-elision .tools,
.g-reqs .tools {
    padding-left: 3px;
}
.tool {
    position: relative;
    display: flex;
    flex-direction: column;
    align-items: center;
    text-align: center;
    white-space: nowrap;
    line-height: 15px;
}
.low svg:first-child {
    margin-bottom: 5px;
}
.w40 { width: 38px; }
.w50 { width: 50px; }
.w56 { width: 56px; }
.w64 { width: 64px; }
.w74 { width: 74px; }
.w100 { width: 100px; }
.tool .drop {
    position: absolute;
    bottom: 5px;
    left: 50%;
    margin-left: -3px;
    color: #777;
}
button:disabled {
    color: #b4b4b4;
}
button:disabled svg {
    opacity: .4;
}
.group-name {
    position: relative;
    height: 14px;
    line-height: 14px;
    text-align: center;
}
.g-actions .group-name {
    padding-right: 16px;
}
.launch {
    position: absolute;
    right: 6px;
    top: 3px;
}
.icons {
    display: grid;
    align-content: start;
    gap: 8px 4px;
    padding: 5px 8px 0;
}
.icons button {
    display: flex;
    justify-content: center;
    align-items: center;
    height: 20px;
}
.one {
    padding: 5px 6px 0;
}
.two {
    grid-template-columns: 16px 16px;
}
.three {
    grid-template-columns: 16px 16px 16px;
    padding-left: 6px;
}
.links {
    display: flex;
    flex-direction: column;
    gap: 7px;
    padding: 1px 0 0 4px;
}
.links button {
    display: flex;
    align-items: center;
    white-space: nowrap;
}
.letter {
    font-family: "Liberation Sans", sans-serif;
    font-size: 13px;
    fill: #8b0000;
}

/* scroll bars */
.vscroll {
    display: flex;
    flex-direction: column;
    align-items: center;
    width: 17px;
    padding: 4px 0;
    background: #f0f0f0;
    color: #8f8f8f;
    flex: none;
}
.track {
    flex: 1;
    width: 100%;
    padding-top: 3px;
}
.thumb {
    background: #cdcdcd;
}
.doc-thumb {
    height: 57%;
}
.canvas-thumb {
    height: 95%;
    margin-top: 36px;
}
.hscroll {
    display: flex;
    align-items: center;
    height: 17px;
    margin-right: 17px;
    padding: 0 4px;
    background: #f0f0f0;
    color: #8f8f8f;
    flex: none;
}
.htrack {
    flex: 1;
    height: 100%;
    padding-left: 10%;
}
.hthumb {
    width: 24%;
    height: 100%;
    background: #cdcdcd;
}

/* parsed document */
.doc-area {
    display: flex;
    flex: 1;
    min-height: 0;
    background: #fff;
}
.doc {
    flex: 1;
    overflow: hidden;
    font-family: Lato, sans-serif;
    font-size: 14px;
    line-height: 19px;
    white-space: nowrap;
    color: #000;
}
.doc h2 {
    width: 624px;
    text-align: center;
    font-size: 20px;
    line-height: 26px;
    font-weight: 300;
    color: #1f4690;
}
.doc h3 {
    display: flex;
    padding-top: 4px;
    font-size: 15px;
    line-height: 22px;
    font-weight: 300;
    color: #1f4690;
}
.doc h3 span {
    width: 48px;
}
.doc p {
    margin-bottom: 11px;
}
.doc .indent {
    padding-left: 48px;
}
.doc .item {
    padding-left: 24px;
}
.doc .item span {
    display: inline-block;
    width: 24px;
    margin-left: -24px;
}

/* parser form */
.form {
    flex: none;
    padding: 10px 10px 9px;
    background: #f8f8f8;
}
.row {
    display: flex;
    align-items: center;
    gap: 5px;
    height: 26px;
    margin-bottom: 10px;
}
.row > label:first-child {
    width: 58px;
    flex: none;
    white-space: nowrap;
}
.row input[type="text"], .combo select {
    flex: 1;
    width: 100%;
    min-width: 0;
    height: 26px;
    border: 1px solid #abadb3;
    border-radius: 0;
    background: #fff;
    font: inherit;
    color: #111;
    padding: 0 2px;
}
.row .inset {
    padding-left: 7px !important;
}
.combo {
    position: relative;
    flex: 1;
}
.combo select {
    appearance: none;
    background: linear-gradient(#f0f0f0, #e5e5e5);
    padding: 0 5px 2px;
}
.combo svg {
    position: absolute;
    right: 5px;
    top: 9px;
    color: #555;
}
.btn {
    display: flex;
    align-items: center;
    justify-content: center;
    height: 26px;
    border: 1px solid #707070;
    background: #ddd;
}
.w25 { width: 25px; }
.w12 { width: 12px; }
.w20 { width: 20px; }
.row.last {
    height: 20px;
    margin: 12px 0 0;
}
.row.last input[type="checkbox"] {
    appearance: none;
    width: 14px;
    height: 14px;
    margin: 0 0 0 1px;
    border: 1px solid #707070;
    background: #fff;
}
.row.last input[type="checkbox"]:checked::before {
    content: "";
    display: block;
    width: 5px;
    height: 9px;
    margin: 0 0 0 4px;
    border: solid #212121;
    border-width: 0 2px 2px 0;
    transform: rotate(40deg);
}
.count-label {
    margin-left: 17px;
}
.row .count {
    flex: none !important;
    width: 30px !important;
    height: 18px !important;
    margin-left: 4px;
}

/* status bar */
.status {
    display: flex;
    align-items: center;
    height: 23px;
    flex: none;
    padding-left: 3px;
    border-top: 1px solid #c5c5c5;
}
.status span {
    padding-right: 6px;
    margin-right: 7px;
    line-height: 18px;
    border-right: 1px solid #555;
    white-space: nowrap;
}
.status span:nth-of-type(4) {
    border: 0;
}
.grip {
    margin: 6px 2px 0 auto;
}

/* diagram */
.work {
    display: flex;
    flex: 1;
    min-height: 0;
}
.canvas-area {
    display: flex;
    flex-direction: column;
    flex: 1;
    min-width: 0;
    background: #fff;
}
.canvas-row {
    display: flex;
    flex: 1;
    min-height: 0;
}
.canvas {
    position: relative;
    flex: 1;
    overflow: hidden;
}
.node {
    position: absolute;
    display: flex;
    flex-direction: column;
    width: 133px;
    height: 155px;
    border: 2px solid #111;
    border-radius: 4px;
    background: #f0e68c;
    font-size: 10px;
    line-height: 14px;
    white-space: nowrap;
}
.node b {
    padding-top: 1px;
    font-weight: normal;
    text-align: center;
}
.node h4 {
    display: flex;
    align-items: center;
    justify-content: center;
    height: 29px;
    font-size: 10px;
    text-align: center;
    border-bottom: 1px solid #333;
}
.node p {
    margin: auto 0;
    padding-left: 4px;
}
.leaf::after {
    content: "";
    position: absolute;
    right: 0;
    top: 0;
    width: 5px;
    height: 4px;
    background: #000;
}
.edges {
    position: absolute;
    left: 0;
    top: 0;
}
.lines {
    fill: none;
    stroke: #222;
    stroke-dasharray: 9 4;
}
.edge-label {
    position: absolute;
    transform: translateX(-50%);
    font-size: 10px;
    line-height: 14px;
    white-space: nowrap;
}
.navpad {
    position: absolute;
    left: 5px;
    top: 5px;
    display: grid;
    grid-template-columns: 16px 16px 16px;
    grid-template-rows: 16px 16px 16px 6px 16px 106px 16px;
}
.navpad button {
    width: 16px;
    height: 16px;
    border: 2px solid #b9b9b9;
    border-radius: 50%;
    background: #cbcbcb;
    color: #fff;
    font-size: 8px;
    line-height: 10px;
    text-align: center;
}
.n-up { grid-area: 1 / 2; }
.n-left { grid-area: 2 / 1; }
.n-right { grid-area: 2 / 3; }
.n-down { grid-area: 3 / 2; }
.n-in { grid-area: 5 / 2; }
.n-out { grid-area: 7 / 2; margin-top: -4px; }
.n-zoom {
    grid-area: 6 / 2;
    appearance: none;
    writing-mode: vertical-lr;
    justify-self: center;
    width: 18px;
    height: 90px;
    margin: 6px 0 0;
    background: linear-gradient(90deg, transparent 7px, #f3f3f3 7px, #f3f3f3 11px, transparent 11px);
}
.n-zoom::-webkit-slider-thumb {
    appearance: none;
    width: 18px;
    height: 11px;
    border: 1px solid #ddd;
    background: #fcfcfc;
}

/* toolbox */
.toolbox {
    display: flex;
    flex-direction: column;
    width: 238px;
    flex: none;
    margin-left: 4px;
    padding: 1px;
    border: 1px solid #a0a0a0;
    background: #fff;
}
.toolbox header {
    display: flex;
    align-items: center;
    gap: 11px;
    height: 23px;
    padding: 0 8px 0 5px;
    background: #2b579a;
    color: #fff;
}
.toolbox header button:first-of-type {
    margin-left: auto;
}
.overview {
    height: 154px;
    border-bottom: 4px solid #e5e5e5;
}
.pane-tabs {
    display: flex;
    align-items: flex-end;
    height: 23px;
}
.pane-tab {
    height: 21px;
    padding: 0 4px;
    border: 1px solid #acacac;
    border-left: 0;
    background: #efefef;
}
.pane-tab.on {
    position: relative;
    height: 23px;
    width: 46px;
    border-left: 1px solid #acacac;
    border-bottom: 0;
    background: #fff;
}
.pane {
    flex: 1;
    min-height: 0;
    margin-top: -1px;
    border: 1px solid #acacac;
    overflow: hidden;
}
.palette {
    display: flex;
    align-items: center;
    gap: 6px;
    padding: 2px;
}
.palette button {
    display: flex;
    justify-content: center;
    align-items: center;
    width: 30px;
    height: 32px;
}
.palette .on {
    width: 32px;
    background: #c5dcf7;
}
.items {
    list-style: none;
    margin: 12px 7px 0 17px;
    overflow: hidden;
}
.items li {
    display: flex;
    align-items: center;
    gap: 5px;
    height: 42px;
    white-space: nowrap;
}
```
